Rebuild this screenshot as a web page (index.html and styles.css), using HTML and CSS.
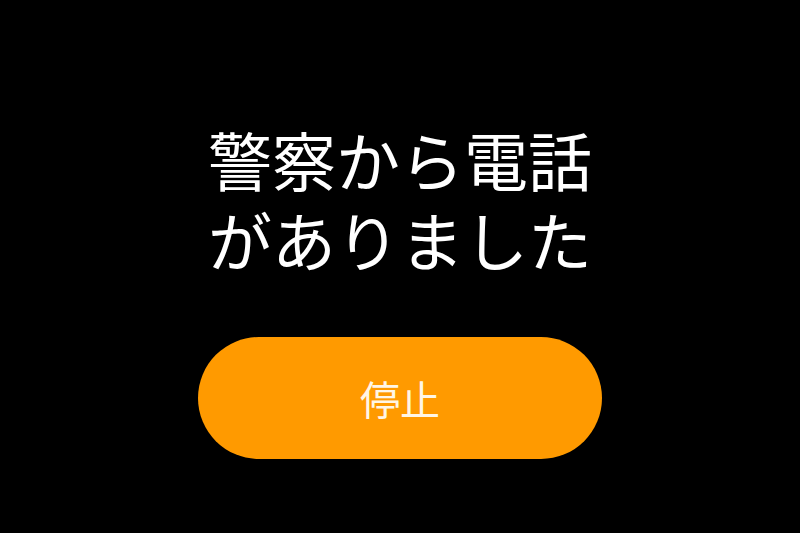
FILE: index.html
```html
<!DOCTYPE html>
<html lang="ja">
<head>
<meta charset="utf-8">
<link rel="stylesheet" href="styles.css">
</head>
<body>
<main class="screen">
  <h1 class="message">警察から電話<br>がありました</h1>
  <button class="stop">停止</button>
</main>
</body>
</html>
```
FILE: styles.css
```css
html, body {
  margin: 0;
  padding: 0;
  background: #000;
  width: 800px;
  height: 533px;
  overflow: hidden;
}
.screen {
  display: flex;
  flex-direction: column;
  align-items: center;
  padding-top: 118px;
  font-family: "Noto Sans CJK JP", "Noto Sans", sans-serif;
}
.message {
  margin: 0;
  color: #fff;
  font-size: 64px;
  font-weight: 400;
  line-height: 80px;
  text-align: center;
  letter-spacing: 0;
}
.stop {
  margin-top: 59px;
  width: 404px;
  height: 122px;
  border: none;
  border-radius: 61px;
  background: #ff9a00;
  color: #fff6e6;
  font-family: "Noto Sans CJK JP", "Noto Sans", sans-serif;
  font-size: 40px;
  font-weight: 400;
  padding: 0;
}
```
